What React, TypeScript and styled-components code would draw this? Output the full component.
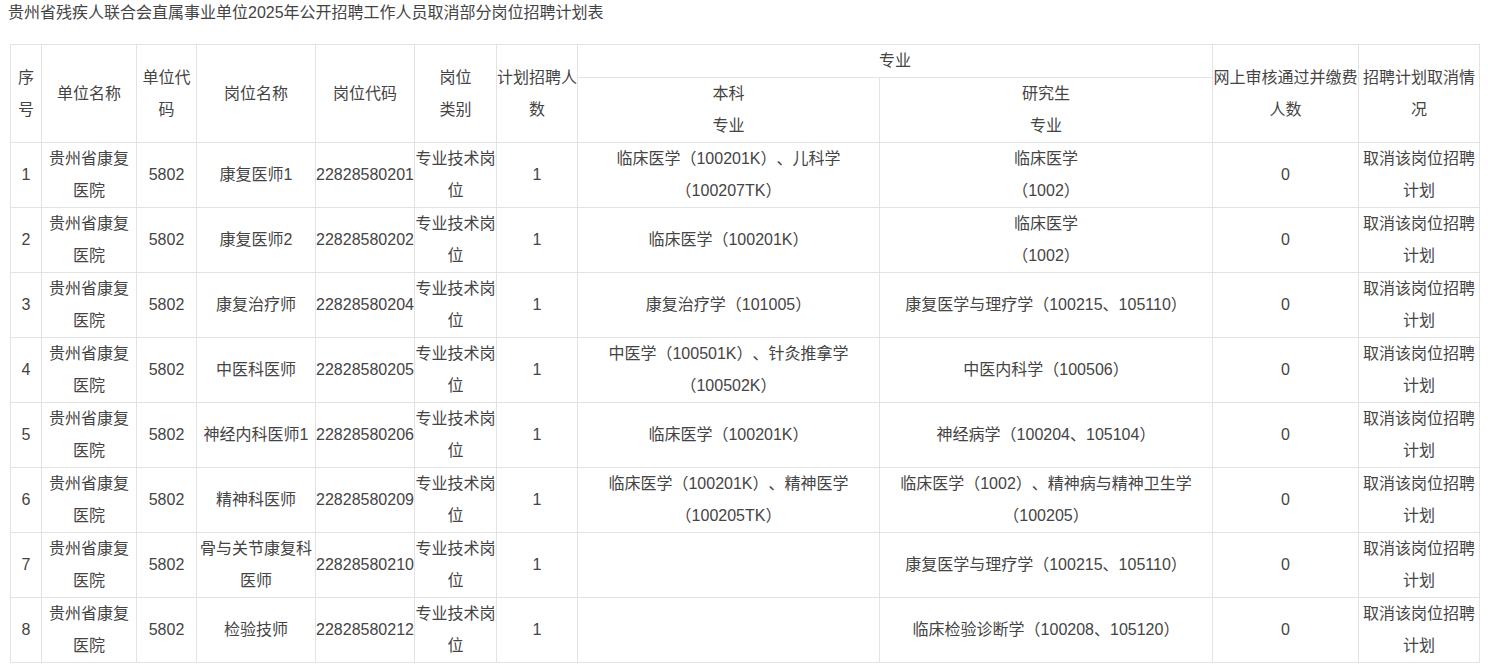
import React from "react";
import styled, { createGlobalStyle } from "styled-components";

const GlobalStyle = createGlobalStyle`
  body {
    margin: 0;
    background: #ffffff;
    font-family: "Liberation Sans", "Noto Sans CJK SC", sans-serif;
    color: #444444;
    text-spacing-trim: space-all;
  }
`;

const StyledPage = styled.div`
  padding: 0 8px;
`;

const StyledTitle = styled.div`
  font-size: 16px;
  line-height: 26px;
  color: #444444;
  white-space: nowrap;
`;

const StyledTable = styled.table`
  margin: 18px 0 0 2px;
  width: 1469px;
  table-layout: fixed;
  border-collapse: collapse;
  font-size: 16px;
  line-height: 32px;
`;

const StyledHeadCell = styled.th<{ $short?: boolean }>`
  border: 1px solid #e3e3e3;
  padding: 0;
  font-weight: normal;
  text-align: center;
  vertical-align: middle;
  height: ${(p) => (p.$short ? "32px" : "auto")};
`;

const StyledCell = styled.td`
  border: 1px solid #e3e3e3;
  padding: 0;
  height: 64px;
  text-align: center;
  vertical-align: middle;
`;

type Row = {
  post: string;
  code: string;
  bachelor: string;
  graduate: string;
};

const widths = [31, 95, 60, 119, 99, 82, 81, 302, 333, 146, 121];

const rows: Row[] = [
  {
    post: "康复医师1",
    code: "22828580201",
    bachelor: "临床医学（100201K）、儿科学（100207TK）",
    graduate: "临床医学\n（1002）",
  },
  {
    post: "康复医师2",
    code: "22828580202",
    bachelor: "临床医学（100201K）",
    graduate: "临床医学\n（1002）",
  },
  {
    post: "康复治疗师",
    code: "22828580204",
    bachelor: "康复治疗学（101005）",
    graduate: "康复医学与理疗学（100215、105110）",
  },
  {
    post: "中医科医师",
    code: "22828580205",
    bachelor: "中医学（100501K）、针灸推拿学（100502K）",
    graduate: "中医内科学（100506）",
  },
  {
    post: "神经内科医师1",
    code: "22828580206",
    bachelor: "临床医学（100201K）",
    graduate: "神经病学（100204、105104）",
  },
  {
    post: "精神科医师",
    code: "22828580209",
    bachelor: "临床医学（100201K）、精神医学（100205TK）",
    graduate: "临床医学（1002）、精神病与精神卫生学（100205）",
  },
  {
    post: "骨与关节康复科医师",
    code: "22828580210",
    bachelor: "",
    graduate: "康复医学与理疗学（100215、105110）",
  },
  {
    post: "检验技师",
    code: "22828580212",
    bachelor: "",
    graduate: "临床检验诊断学（100208、105120）",
  },
];

const Lines: React.FC<{ text: string }> = ({ text }) => (
  <>
    {text.split("\n").map((line, i) => (
      <React.Fragment key={i}>
        {i > 0 && <br />}
        {line}
      </React.Fragment>
    ))}
  </>
);

const App: React.FC = () => {
  return (
    <StyledPage>
      <GlobalStyle />
      <StyledTitle>
        贵州省残疾人联合会直属事业单位2025年公开招聘工作人员取消部分岗位招聘计划表
      </StyledTitle>
      <StyledTable>
        <colgroup>
          {widths.map((w, i) => (
            <col key={i} style={{ width: w }} />
          ))}
        </colgroup>
        <thead>
          <tr>
            <StyledHeadCell rowSpan={2}>序号</StyledHeadCell>
            <StyledHeadCell rowSpan={2}>单位名称</StyledHeadCell>
            <StyledHeadCell rowSpan={2}>单位代码</StyledHeadCell>
            <StyledHeadCell rowSpan={2}>岗位名称</StyledHeadCell>
            <StyledHeadCell rowSpan={2}>岗位代码</StyledHeadCell>
            <StyledHeadCell rowSpan={2}>
              岗位
              <br />
              类别
            </StyledHeadCell>
            <StyledHeadCell rowSpan={2}>计划招聘人数</StyledHeadCell>
            <StyledHeadCell colSpan={2} $short>
              专业
            </StyledHeadCell>
            <StyledHeadCell rowSpan={2}>网上审核通过并缴费人数</StyledHeadCell>
            <StyledHeadCell rowSpan={2}>招聘计划取消情况</StyledHeadCell>
          </tr>
          <tr>
            <StyledHeadCell>
              本科
              <br />
              专业
            </StyledHeadCell>
            <StyledHeadCell>
              研究生
              <br />
              专业
            </StyledHeadCell>
          </tr>
        </thead>
        <tbody>
          {rows.map((row, i) => (
            <tr key={row.code}>
              <StyledCell>{i + 1}</StyledCell>
              <StyledCell>贵州省康复医院</StyledCell>
              <StyledCell>5802</StyledCell>
              <StyledCell>{row.post}</StyledCell>
              <StyledCell>{row.code}</StyledCell>
              <StyledCell>专业技术岗位</StyledCell>
              <StyledCell>1</StyledCell>
              <StyledCell>
                <Lines text={row.bachelor} />
              </StyledCell>
              <StyledCell>
                <Lines text={row.graduate} />
              </StyledCell>
              <StyledCell>0</StyledCell>
              <StyledCell>取消该岗位招聘计划</StyledCell>
            </tr>
          ))}
        </tbody>
      </StyledTable>
    </StyledPage>
  );
};

export default App;
